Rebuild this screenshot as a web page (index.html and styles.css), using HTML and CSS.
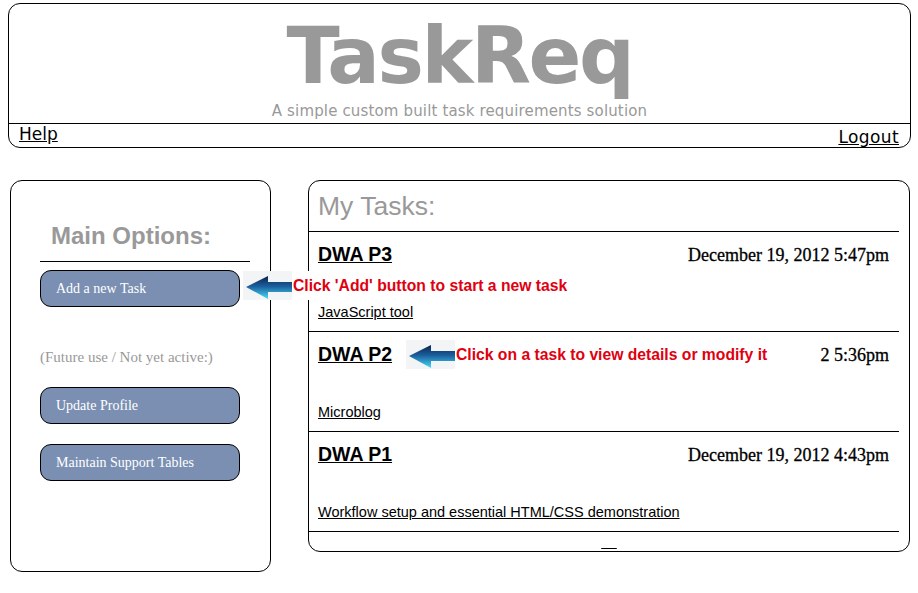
FILE: index.html
```html
<!DOCTYPE html>
<html>
<head>
<meta charset="utf-8">
<title>TaskReq</title>
<link rel="stylesheet" href="styles.css">
</head>
<body>
<header class="masthead">
  <div class="brand">
    <h1 class="brand-title">TaskReq</h1>
    <p class="brand-sub">A simple custom built task requirements solution</p>
  </div>
  <nav class="topnav">
    <a class="nav-help" href="#">Help</a>
    <a class="nav-logout" href="#">Logout</a>
  </nav>
</header>

<main class="content">
  <aside class="options">
    <h2 class="options-title">Main Options:</h2>
    <button class="opt-btn opt-first">Add a new Task</button>
    <p class="options-note">(Future use / Not yet active:)</p>
    <button class="opt-btn">Update Profile</button>
    <button class="opt-btn opt-gap">Maintain Support Tables</button>
  </aside>

  <section class="tasks">
    <h2 class="tasks-title">My Tasks:</h2>
    <div class="task">
      <div class="task-head">
        <a class="task-name" href="#">DWA P3</a>
        <span class="task-date">December 19, 2012 5:47pm</span>
      </div>
      <a class="task-desc" href="#">JavaScript tool</a>
    </div>
    <div class="task">
      <div class="task-head">
        <a class="task-name" href="#">DWA P2</a>
        <span class="task-date">December 19, 2012 5:36pm</span>
      </div>
      <a class="task-desc" href="#">Microblog</a>
    </div>
    <div class="task">
      <div class="task-head">
        <a class="task-name" href="#">DWA P1</a>
        <span class="task-date">December 19, 2012 4:43pm</span>
      </div>
      <a class="task-desc" href="#">Workflow setup and essential HTML/CSS demonstration</a>
    </div>
    <div class="tasks-foot"><a class="foot-link" href="#">&nbsp;&nbsp;&nbsp;&nbsp;</a></div>
  </section>
</main>

<div class="callout callout-add">
  <svg class="arrow" width="49" height="29" viewBox="0 0 49 29">
    <defs>
      <linearGradient id="ag1" x1="0" y1="0" x2="0" y2="1">
        <stop offset="0" stop-color="#0b2350"/>
        <stop offset="0.45" stop-color="#1b5f9c"/>
        <stop offset="1" stop-color="#47dcf8"/>
      </linearGradient>
    </defs>
    <rect x="0" y="0" width="49" height="29" fill="#f2f4f6"/>
    <path d="M3 16 L25 5 L25 11 L49 11 L49 21 L25 21 L25 28 Z" fill="url(#ag1)"/>
  </svg>
  <span class="callout-text">Click 'Add' button to start a new task</span>
</div>

<div class="callout callout-task">
  <svg class="arrow" width="49" height="29" viewBox="0 0 49 29">
    <defs>
      <linearGradient id="ag2" x1="0" y1="0" x2="0" y2="1">
        <stop offset="0" stop-color="#0b2350"/>
        <stop offset="0.45" stop-color="#1b5f9c"/>
        <stop offset="1" stop-color="#47dcf8"/>
      </linearGradient>
    </defs>
    <rect x="0" y="0" width="49" height="29" fill="#f2f4f6"/>
    <path d="M3 16 L25 5 L25 11 L49 11 L49 21 L25 21 L25 28 Z" fill="url(#ag2)"/>
  </svg>
  <span class="callout-text">Click on a task to view details or modify it</span>
</div>
</body>
</html>
```

FILE: styles.css
```css
html, body {
  margin: 0;
  padding: 0;
  background: #fff;
}
body {
  width: 918px;
  height: 593px;
  position: relative;
  overflow: hidden;
  font-family: "Liberation Sans", Arial, sans-serif;
  color: #000;
}
a { color: #000; }

/* ---------- header ---------- */
.masthead {
  margin: 3px 7px 0 8px;
  height: 145px;
  box-sizing: border-box;
  border: 1px solid #000;
  border-radius: 12px;
  display: flex;
  flex-direction: column;
}
.brand {
  height: 119px;
  display: flex;
  flex-direction: column;
  align-items: center;
}
.brand-title {
  margin: 13px 0 0 0;
  font-family: "DejaVu Sans", Verdana, sans-serif;
  font-weight: bold;
  font-size: 78px;
  line-height: 78px;
  letter-spacing: -2.4px;
  color: #999;
}
.brand-sub {
  margin: 7px 0 0 0;
  font-family: "DejaVu Sans", Verdana, sans-serif;
  font-size: 15px;
  line-height: 18px;
  letter-spacing: 0.15px;
  color: #999;
}
.topnav {
  flex: 1;
  border-top: 1px solid #000;
  display: flex;
  justify-content: space-between;
  padding: 0 11px 0 10px;
  font-family: "DejaVu Sans", Verdana, sans-serif;
  font-size: 17px;
  line-height: 20px;
}
.nav-help { align-self: flex-start; }
.nav-logout { align-self: flex-end; letter-spacing: 0.4px; }

/* ---------- content ---------- */
.content {
  display: flex;
  align-items: flex-start;
  gap: 37px;
  margin: 32px 0 0 10px;
}

.options {
  width: 261px;
  height: 392px;
  box-sizing: border-box;
  border: 1px solid #000;
  border-radius: 12px;
  padding: 41px 0 0 29px;
  display: flex;
  flex-direction: column;
  align-items: flex-start;
}
.options-title {
  width: 210px;
  box-sizing: border-box;
  margin: 0;
  padding: 0 0 11px 11px;
  border-bottom: 1px solid #000;
  font-size: 24px;
  line-height: 28px;
  font-weight: bold;
  color: #999;
}
.opt-btn {
  width: 200px;
  height: 37px;
  box-sizing: border-box;
  border: 1px solid #000;
  border-radius: 11px;
  background: #7a8fb2;
  color: #fff;
  font-family: "Liberation Serif", "Times New Roman", serif;
  font-size: 14px;
  text-align: left;
  padding: 0 0 0 15px;
}
.opt-first { margin-top: 8px; }
.opt-gap { margin-top: 20px; }
.options-note {
  margin: 40px 0 20px 0;
  font-family: "Liberation Serif", "Times New Roman", serif;
  font-size: 15px;
  line-height: 20px;
  color: #999;
}

.tasks {
  width: 602px;
  box-sizing: border-box;
  border: 1px solid #000;
  border-radius: 12px;
}
.tasks-title {
  margin: 0 10px 0 0;
  padding: 10px 0 10px 9px;
  border-bottom: 1px solid #000;
  font-size: 26.5px;
  line-height: 30px;
  font-weight: normal;
  color: #999;
}
.task {
  height: 100px;
  box-sizing: border-box;
  margin-right: 10px;
  padding: 10px 10px 11px 9px;
  border-bottom: 1px solid #000;
  display: flex;
  flex-direction: column;
  justify-content: space-between;
  align-items: flex-start;
}
.task-head {
  align-self: stretch;
  display: flex;
  justify-content: space-between;
  align-items: baseline;
  line-height: 24px;
}
.task-name {
  font-size: 19.5px;
  font-weight: bold;
}
.task-date {
  font-family: "Liberation Serif", "Times New Roman", serif;
  font-size: 18px;
  font-weight: normal;
  -webkit-text-stroke: 0.3px #000;
}
.task-desc {
  font-size: 14.5px;
  line-height: 16px;
}
.tasks-foot {
  padding: 2px 0 1px 0;
  text-align: center;
  font-size: 14px;
  line-height: 16px;
}

/* ---------- callouts (overlays) ---------- */
.callout {
  position: absolute;
  display: flex;
  align-items: center;
  background: #fff;
}
.callout-add { left: 243px; top: 271px; }
.callout-task { left: 406px; top: 339px; width: 414px; height: 31px; }
.arrow { display: block; flex: none; }
.callout-text {
  padding-left: 1px;
  font-size: 15.7px;
  font-weight: bold;
  color: #e0000f;
  white-space: nowrap;
}
```
